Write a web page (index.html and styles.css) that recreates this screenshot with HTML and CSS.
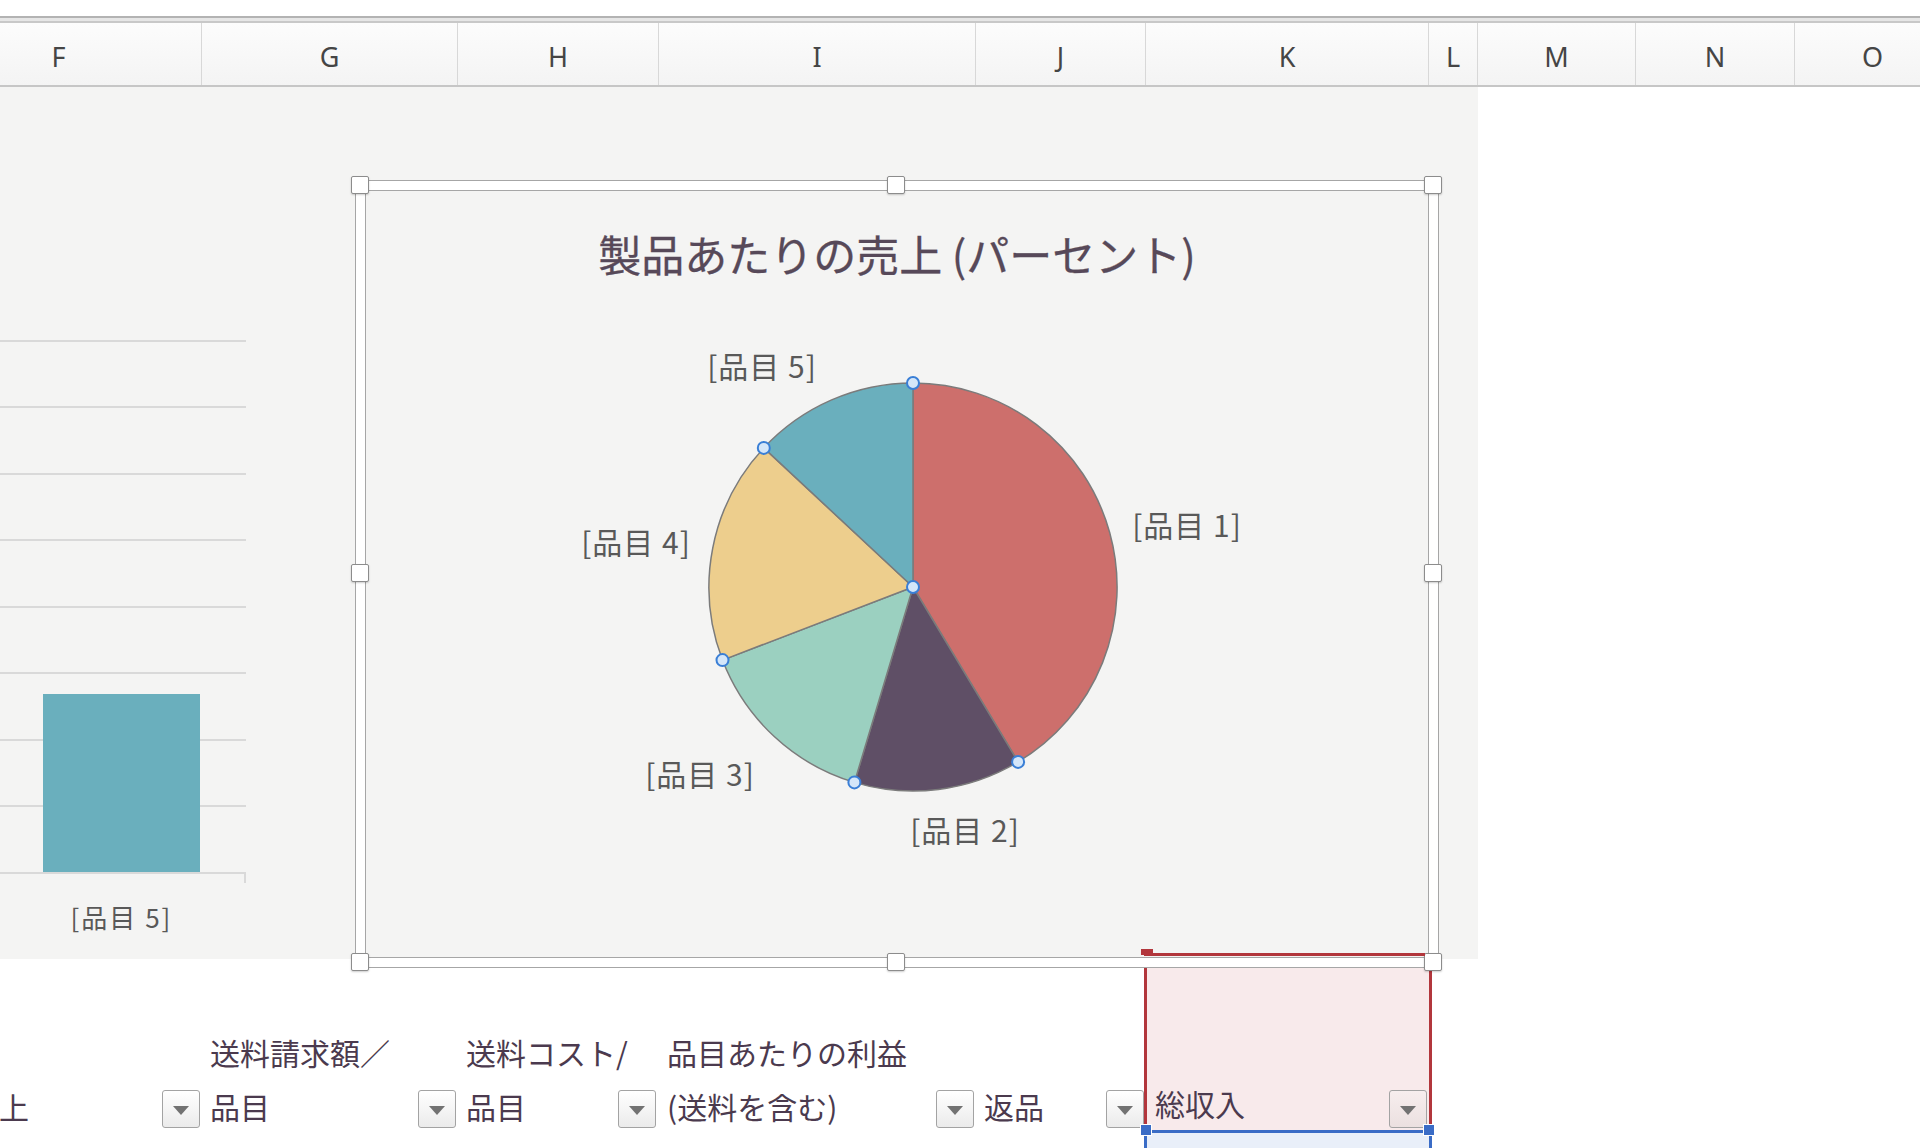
FILE: index.html
```html
<!DOCTYPE html>
<html lang="ja">
<head>
<meta charset="utf-8">
<title>製品あたりの売上</title>
<link rel="stylesheet" href="styles.css">
</head>
<body>
<div class="topbar"></div>
<div class="rule"></div>
<div class="colhead">
  <div class="ch w-f">F</div>
  <div class="ch w-g">G</div>
  <div class="ch w-h">H</div>
  <div class="ch w-i">I</div>
  <div class="ch w-j">J</div>
  <div class="ch w-k">K</div>
  <div class="ch w-l">L</div>
  <div class="ch w-m">M</div>
  <div class="ch w-n">N</div>
  <div class="ch w-o">O</div>
</div>
<div class="sheet">
  <div class="charts">
    <div class="barchart">
      <div class="plot"><div class="bar"></div></div>
      <div class="tick"></div>
      <div class="axis-label">[品目 5]</div>
    </div>
    <div class="piechart">
      <div class="pie-inner">
        <div class="title">製品あたりの売上 (パーセント)</div>
        <svg class="pie" width="1062" height="677" viewBox="366 279 1062 677">
          <g class="slices">
            <path class="s1" d="M913 587 L913 383 A204 204 0 0 1 1018.1 761.9 Z"/>
            <path class="s2" d="M913 587 L1018.1 761.9 A204 204 0 0 1 854.4 782.4 Z"/>
            <path class="s3" d="M913 587 L854.4 782.4 A204 204 0 0 1 722.5 660.1 Z"/>
            <path class="s4" d="M913 587 L722.5 660.1 A204 204 0 0 1 763.8 447.9 Z"/>
            <path class="s5" d="M913 587 L763.8 447.9 A204 204 0 0 1 913 383 Z"/>
          </g>
          <g class="pts">
            <circle cx="913" cy="383" r="6"/>
            <circle cx="1018.1" cy="761.9" r="6"/>
            <circle cx="854.4" cy="782.4" r="6"/>
            <circle cx="722.5" cy="660.1" r="6"/>
            <circle cx="763.8" cy="447.9" r="6"/>
            <circle cx="913" cy="587" r="6"/>
          </g>
          <text class="pie-label" x="762" y="365">[品目 5]</text>
          <text class="pie-label" x="1187" y="524">[品目 1]</text>
          <text class="pie-label" x="636" y="541">[品目 4]</text>
          <text class="pie-label" x="700" y="773">[品目 3]</text>
          <text class="pie-label" x="965" y="829">[品目 2]</text>
        </svg>
      </div>
      <div class="handle h-l h-t"></div>
      <div class="handle h-c h-t"></div>
      <div class="handle h-r h-t"></div>
      <div class="handle h-l h-m"></div>
      <div class="handle h-r h-m"></div>
      <div class="handle h-l h-b"></div>
      <div class="handle h-c h-b"></div>
      <div class="handle h-r h-b"></div>
    </div>
  </div>
  <div class="row row-head">
    <div class="cell w-f cell-f"><div class="cell-label">売上</div><div class="dd"></div></div>
    <div class="cell w-g"><div class="cell-label">送料請求額／<br>品目</div><div class="dd"></div></div>
    <div class="cell w-h"><div class="cell-label">送料コスト/<br>品目</div><div class="dd dd-h"></div></div>
    <div class="cell w-i"><div class="cell-label">品目あたりの利益<br>(送料を含む)</div><div class="dd"></div></div>
    <div class="cell w-j"><div class="cell-label">返品</div><div class="dd"></div></div>
    <div class="cell cell-k">
      <div class="cell-label">総収入</div><div class="dd dd-k"></div>
      <div class="k-topline"></div>
      <div class="sq sq-red"></div>
      <div class="sq sq-blue sq-bl"></div>
      <div class="sq sq-blue sq-br"></div>
    </div>
    <div class="cell w-l"></div>
    <div class="cell w-m"></div>
    <div class="cell w-n"></div>
    <div class="cell w-o"></div>
  </div>
  <div class="row row-next">
    <div class="cell w-f"></div>
    <div class="cell w-g"></div>
    <div class="cell w-h"></div>
    <div class="cell w-i"></div>
    <div class="cell w-j"></div>
    <div class="cell cell-k2"></div>
    <div class="cell w-l"></div>
  </div>
</div>
</body>
</html>
```
FILE: styles.css
```css
* { box-sizing: border-box; }
html, body { margin: 0; padding: 0; }
body {
  width: 1920px;
  height: 1148px;
  overflow: hidden;
  background: #fff;
  font-family: "Noto Sans CJK JP", "Noto Sans", sans-serif;
}
.topbar { height: 16px; }
.rule {
  height: 7px;
  border-top: 2px solid #b3b3b3;
  border-bottom: 2px solid #c8c8c8;
  background: #e6e6e6;
}
.colhead {
  display: flex;
  height: 64px;
  margin-left: -84px;
  border-bottom: 2px solid #c6c6c6;
  background: linear-gradient(#fcfcfc, #f4f4f4);
}
.ch {
  flex: none;
  display: flex;
  align-items: center;
  justify-content: center;
  padding-top: 4px;
  border-right: 1px solid #d8d8d8;
  font-family: "Noto Sans", sans-serif;
  font-size: 27px;
  color: #454545;
}
.w-f { width: 286px; }
.w-g { width: 256px; }
.w-h { width: 201px; }
.w-i { width: 317px; }
.w-j { width: 170px; }
.w-k { width: 283px; }
.w-l { width: 49px; }
.w-m { width: 158px; }
.w-n { width: 159px; }
.w-o { width: 156px; }

.charts {
  position: relative;
  width: 1478px;
  height: 872px;
  background: #f4f4f3;
}
.barchart { width: 246px; padding-top: 253px; }
.plot {
  height: 534px;
  border-bottom: 2px solid #d9d9d9;
  background: repeating-linear-gradient(to bottom, #d9d9d9 0 2px, transparent 2px 66.5px);
  display: flex;
  align-items: flex-end;
}
.bar {
  width: 157px;
  height: 178px;
  margin-left: 43px;
  background: #6aafbd;
}
.tick {
  width: 246px;
  height: 9px;
  border-right: 2px solid #d9d9d9;
}
.axis-label {
  width: 243px;
  margin-top: 14px;
  line-height: 40px;
  text-align: center;
  font-size: 26px;
  letter-spacing: 2px;
  color: #595959;
}

.piechart {
  position: absolute;
  left: 355px;
  top: 93px;
  width: 1084px;
  height: 788px;
  padding: 9px;
  border: 1px solid #a6a6a6;
  background: #fff;
  z-index: 5;
}
.pie-inner {
  height: 100%;
  border: 1px solid #a6a6a6;
  background: #f4f4f3;
  display: flex;
  flex-direction: column;
  align-items: center;
}
.title {
  margin-top: 36px;
  font-size: 43px;
  line-height: 52px;
  color: #574959;
  white-space: nowrap;
  -webkit-text-stroke: 0.3px #574959;
}
.pie { display: block; flex: none; }
.slices path { stroke: #7b7b7b; stroke-width: 1.5; stroke-linejoin: round; }
.s1 { fill: #cd6f6c; }
.s2 { fill: #5f4f66; }
.s3 { fill: #9bd0c0; }
.s4 { fill: #edce8d; }
.s5 { fill: #6aafbd; }
.pts circle { fill: #d4e6f9; stroke: #3a7fd6; stroke-width: 2; }
.pie-label {
  font-family: "Noto Sans CJK JP", sans-serif;
  font-size: 30px;
  letter-spacing: 1px;
  fill: #595959;
  text-anchor: middle;
  dominant-baseline: central;
}
.handle {
  position: absolute;
  width: 18px;
  height: 18px;
  background: #fff;
  border: 1px solid #8c8c8c;
  border-radius: 2px;
  box-shadow: 0 1px 2px rgba(0, 0, 0, 0.2);
}
.h-l { left: -5px; }
.h-c { left: 531px; }
.h-r { left: 1068px; }
.h-t { top: -5px; }
.h-m { top: 383px; }
.h-b { top: 772px; }

.row { display: flex; margin-left: -84px; }
.row-head { height: 180px; margin-top: -6px; }
.row-next { height: 20px; }
.cell {
  flex: none;
  display: flex;
  align-items: flex-end;
  padding-left: 8px;
}
.cell-f { padding-left: 53px; }
.cell-label {
  flex: 1 1 0;
  min-width: 0;
  font-size: 30px;
  line-height: 54px;
  color: #4b3a4e;
  white-space: nowrap;
}
.dd {
  flex: none;
  margin-left: auto;
  margin-right: 2px;
  margin-bottom: 5px;
  width: 38px;
  height: 38px;
  border: 1px solid #a3a3a3;
  border-radius: 3px;
  background: linear-gradient(#ffffff, #ebebeb);
  display: flex;
  align-items: center;
  justify-content: center;
}
.dd-h { margin-right: 3px; }
.dd::before {
  content: "";
  border-left: 8px solid transparent;
  border-right: 8px solid transparent;
  border-top: 9px solid #727272;
  margin-top: 2px;
}
.cell-k {
  position: relative;
  width: 288px;
  margin-left: -2px;
  margin-right: -3px;
  border: 3px solid #b2363c;
  border-bottom-color: #3a6cc6;
  background: #f8eaeb;
}
.k-topline {
  position: absolute;
  left: -3px;
  top: -3px;
  width: 281px;
  height: 3px;
  background: #b2363c;
  z-index: 6;
}
.dd-k {
  margin-bottom: 2px;
  background: linear-gradient(#f7eeee, #ebe0e0);
}
.sq { position: absolute; width: 12px; height: 12px; }
.sq-red { left: -6px; top: -7px; width: 12px; height: 6px; background: #b2363c; z-index: 6; }
.sq-blue { top: 168px; background: #3a6cc6; border: 1px solid #fff; }
.sq-bl { left: -7px; }
.sq-br { left: 276px; }
.cell-k2 {
  width: 288px;
  margin-left: -2px;
  margin-right: -3px;
  border-left: 3px solid #3a6cc6;
  border-right: 3px solid #3a6cc6;
  background: #e9eff9;
}
```
